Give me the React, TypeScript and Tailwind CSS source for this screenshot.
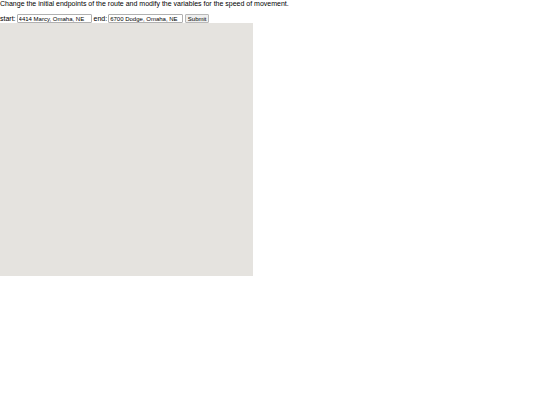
import React, { useState } from "react";

export default function App() {
  const [start, setStart] = useState("4414 Marcy, Omaha, NE");
  const [end, setEnd] = useState("6700 Dodge, Omaha, NE");

  return (
    <main className="bg-white font-['Liberation_Sans',Arial,sans-serif] text-[7px] leading-2 text-black">
      <p>
        Change the initial endpoints of the route and modify the variables for
        the speed of movement.
      </p>
      <form
        className="mt-1.5 flex items-center gap-0.5"
        onSubmit={(e) => e.preventDefault()}
      >
        <div className="flex items-center gap-px">
          <label htmlFor="start">start:</label>
          <input
            id="start"
            type="text"
            className="h-[9px] w-[75px] rounded-[1px] border border-[#b0b0b0] bg-white px-px text-[6px]"
            value={start}
            onChange={(e) => setStart(e.target.value)}
          />
        </div>
        <div className="flex items-center gap-px">
          <label htmlFor="end">end:</label>
          <input
            id="end"
            type="text"
            className="h-[9px] w-[75px] rounded-[1px] border border-[#b0b0b0] bg-white px-px text-[6px]"
            value={end}
            onChange={(e) => setEnd(e.target.value)}
          />
        </div>
        <button
          type="submit"
          className="flex h-[9px] w-6 items-center justify-center rounded-[1px] border border-[#b8b8b8] bg-[#efefef] text-[6px]"
        >
          Submit
        </button>
      </form>
      <div className="size-[253px] bg-[#e5e3df]" />
    </main>
  );
}
